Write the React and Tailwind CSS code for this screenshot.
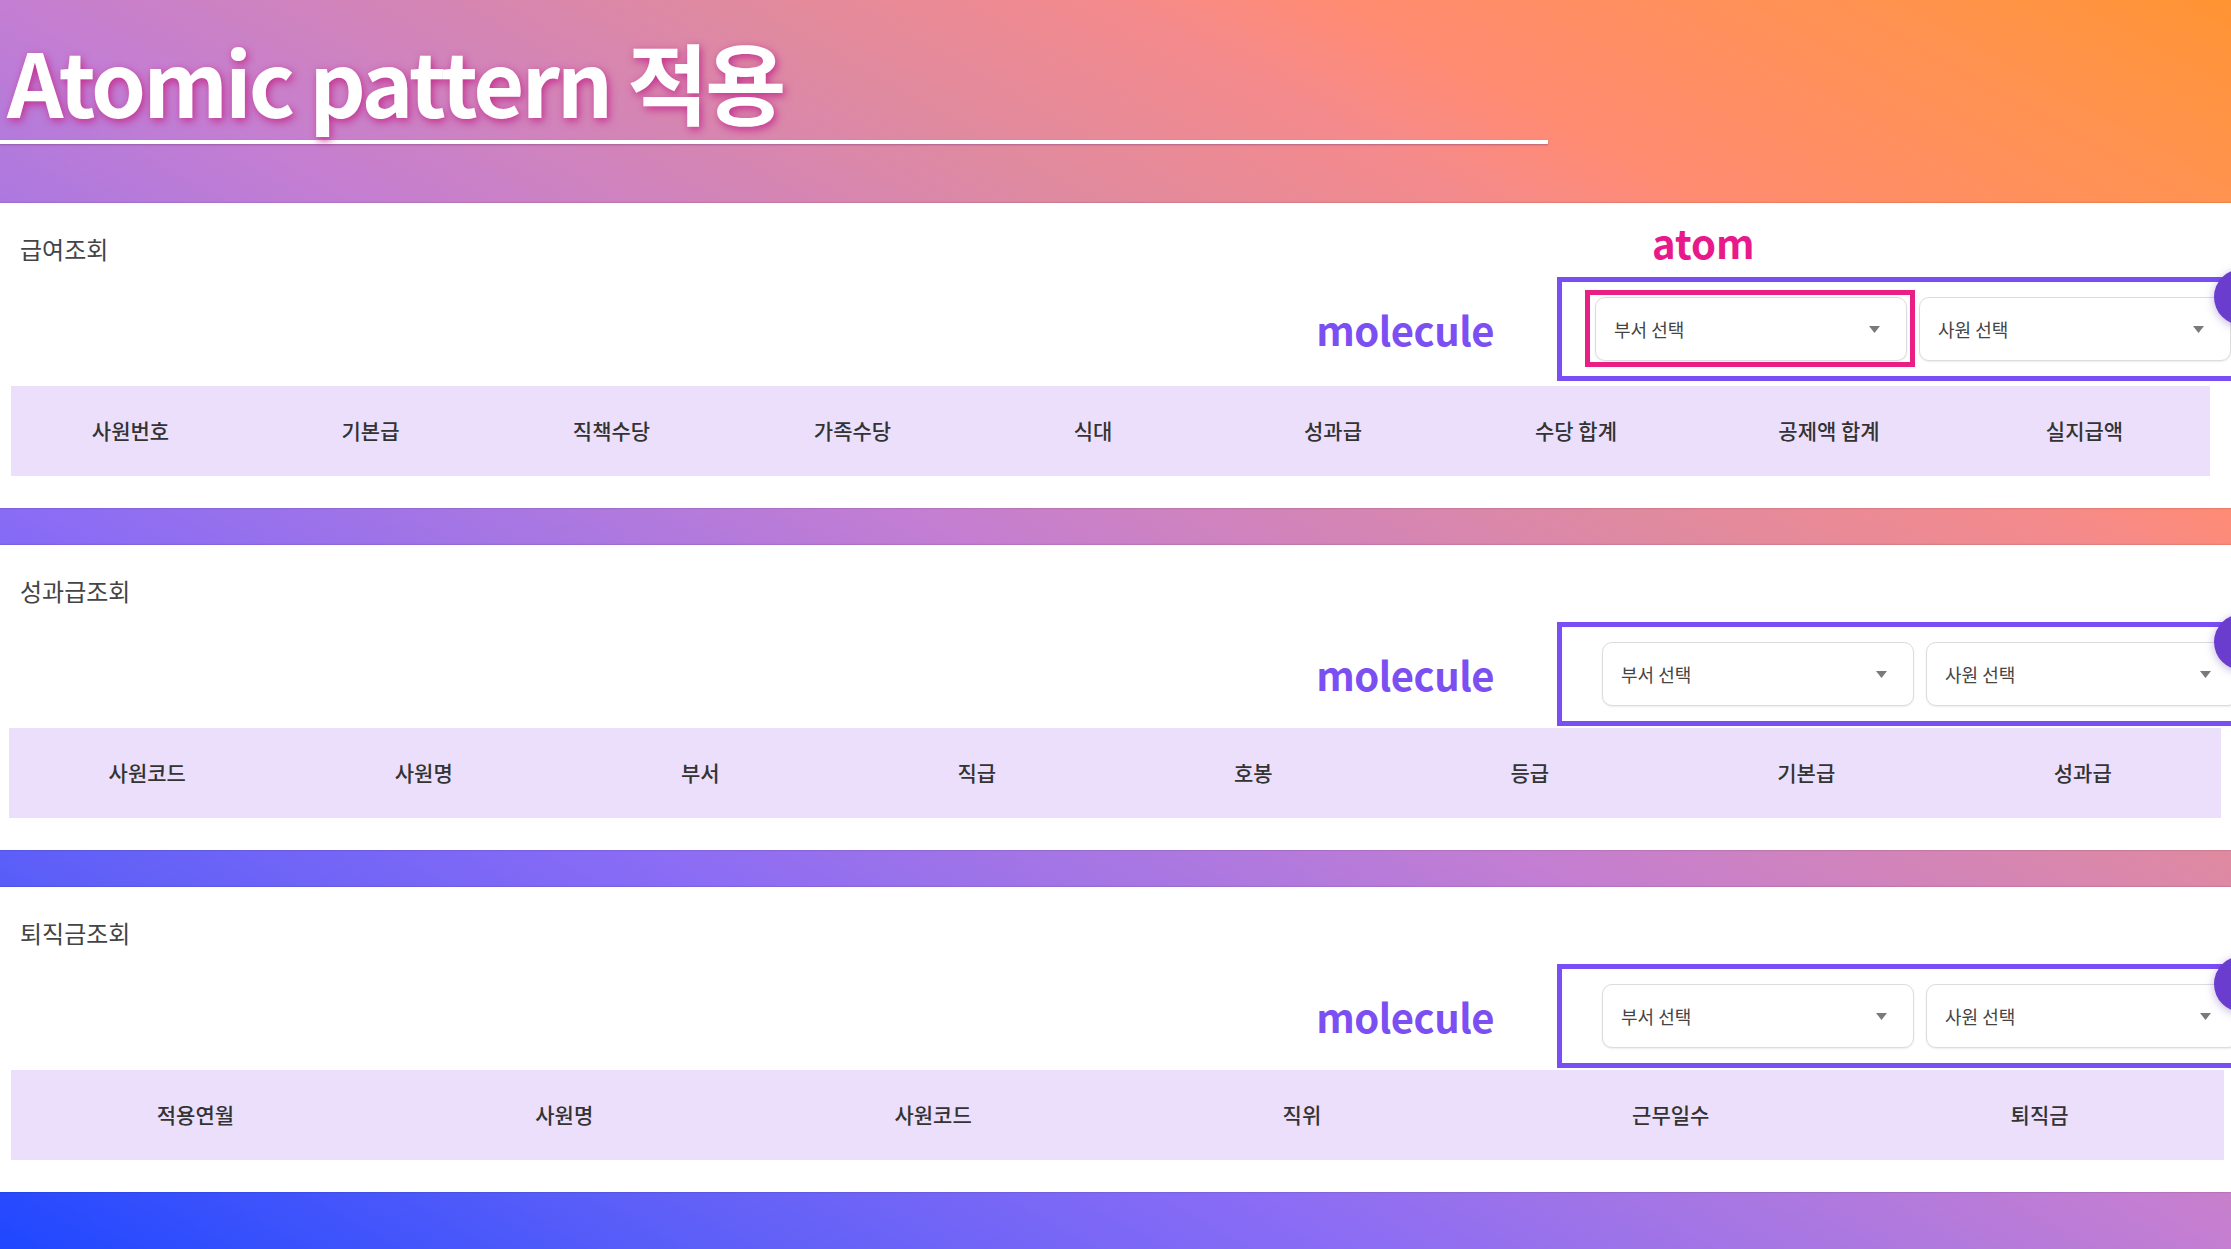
import React from 'react';
import { Settings } from 'lucide-react';

const Caret = () => (
    <svg width="11" height="7" viewBox="0 0 11 7" className="shrink-0">
        <polygon points="0,0 11,0 5.5,7" fill="#7a7a7a" />
    </svg>
);

const Select = ({ label, atom }) => (
    <div className="relative h-[64px] w-[312px] shrink-0">
        {atom && (
            <>
                <div className="absolute -left-[10px] -right-[8px] -top-[7px] -bottom-[6px] border-[5px] border-[#ea1f86]" />
                <div className="absolute left-[57px] top-[-78px] text-[40px] font-bold leading-[46px] text-[#e8198a]">atom</div>
            </>
        )}
        <div className="relative flex h-full items-center justify-between rounded-[10px] border border-[#dcdcdc] bg-white pl-[18px] pr-[26px] shadow-[0_1px_2px_rgba(0,0,0,0.08)]">
            <span className="text-[18px] text-[#444]">{label}</span>
            <Caret />
        </div>
    </div>
);

const Panel = ({ title, columns, grid, tableClass, atom }) => (
    <section className="relative h-[305px] bg-white shadow-[0_0_2px_rgba(0,0,0,0.25)]">
        <div className="pl-[20px] pt-[32px] text-[24px] leading-[28px] text-[#444]">{title}</div>
        <div className={`flex items-center ${atom ? 'mt-[14px]' : 'mt-[17px]'}`}>
            <div className="flex w-[1557px] shrink-0 justify-end pr-[63px]">
                <span className="text-[40px] font-bold leading-none tracking-[-0.5px] text-[#7b4ff2]">molecule</span>
            </div>
            <div className={`relative flex h-[104px] w-[700px] shrink-0 items-center gap-[12px] border-[5px] border-[#7a4ef5] ${atom ? 'pl-[33px]' : 'pl-[40px]'}`}>
                <Select label="부서 선택" atom={atom} />
                <Select label="사원 선택" />
                <div className="absolute left-[652px] top-[-13px] flex h-[56px] w-[56px] items-center justify-center rounded-full bg-[#6a3dcf] shadow-[0_2px_10px_rgba(80,40,160,0.35)]">
                    <Settings size={24} color="#e6dcff" />
                </div>
            </div>
        </div>
        <div className={`grid h-[90px] items-center bg-[#ecdffc] ${atom ? 'mt-[5px]' : 'mt-[2px]'} ${tableClass} ${grid}`}>
            {columns.map((c) => (
                <div key={c} className="text-center text-[21px] font-medium text-[#333]">
                    {c}
                </div>
            ))}
        </div>
    </section>
);

const App = () => {
    return (
        <div className="h-[1249px] w-full overflow-hidden bg-[linear-gradient(to_top_right,#1f47ff_0%,#5d5ff8_16%,#8a6cf5_30%,#ac78e0_42%,#c47ed2_50%,#e08aa0_66%,#f48a8c_75%,#ff8b72_80%,#ff9350_92%,#ff9433_100%)] font-['Noto_Sans_CJK_KR','Noto_Sans',sans-serif]">
            <header className="h-[203px]">
                <h1 className="pl-[7px] pt-[36px] text-[88px] font-bold leading-none tracking-[-3px] text-white [text-shadow:2px_3px_8px_#c42f8f]">
                    Atomic pattern 적용
                </h1>
                <div className="mt-[16px] h-[4px] w-[1548px] bg-white shadow-[0_1px_2px_rgba(120,60,120,0.5)]" />
            </header>

            <Panel
                title="급여조회"
                atom
                columns={['사원번호', '기본급', '직책수당', '가족수당', '식대', '성과급', '수당 합계', '공제액 합계', '실지급액']}
                grid="grid-cols-[239px_241px_241px_241px_240px_240px_246px_260px_1fr]"
                tableClass="ml-[11px] w-[2199px]"
            />

            <div className="mt-[37px]">
                <Panel
                    title="성과급조회"
                    columns={['사원코드', '사원명', '부서', '직급', '호봉', '등급', '기본급', '성과급']}
                    grid="grid-cols-8"
                    tableClass="ml-[9px] w-[2212px]"
                />
            </div>

            <div className="mt-[37px]">
                <Panel
                    title="퇴직금조회"
                    columns={['적용연월', '사원명', '사원코드', '직위', '근무일수', '퇴직금']}
                    grid="grid-cols-6"
                    tableClass="ml-[11px] w-[2213px]"
                />
            </div>
        </div>
    );
};

export default App;
